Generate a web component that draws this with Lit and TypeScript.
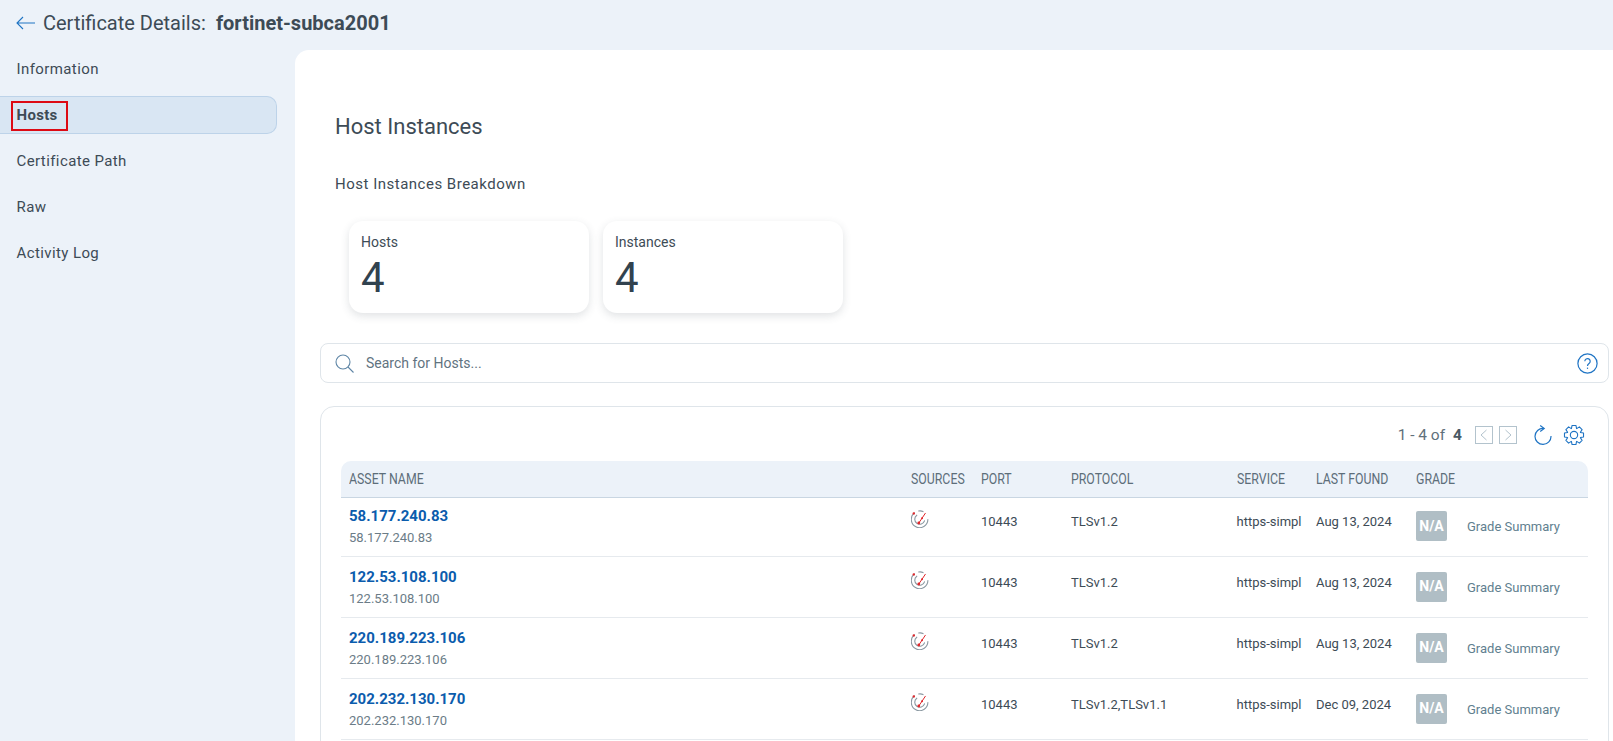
import {LitElement, css, html} from 'lit';
import {customElement} from 'lit/decorators.js';

const nav = ['Information', 'Hosts', 'Certificate Path', 'Raw', 'Activity Log'];

const rows = [
  {ip: '58.177.240.83', protocol: 'TLSv1.2', found: 'Aug 13, 2024'},
  {ip: '122.53.108.100', protocol: 'TLSv1.2', found: 'Aug 13, 2024'},
  {ip: '220.189.223.106', protocol: 'TLSv1.2', found: 'Aug 13, 2024'},
  {ip: '202.232.130.170', protocol: 'TLSv1.2,TLSv1.1', found: 'Dec 09, 2024'},
];

const columns = ['ASSET NAME', 'SOURCES', 'PORT', 'PROTOCOL', 'SERVICE', 'LAST FOUND', 'GRADE', ''];

// outline of an 8 tooth cog, centred on 12,12
function gearPath() {
  const pts: string[] = [];
  for (let i = 0; i < 8; i++) {
    const a = (i * Math.PI) / 4 - Math.PI / 2;
    for (const [r, off] of [[7.6, -0.38], [10.6, -0.2], [10.6, 0.2], [7.6, 0.38]]) {
      const x = 12 + r * Math.cos(a + off);
      const y = 12 + r * Math.sin(a + off);
      pts.push(`${x.toFixed(2)} ${y.toFixed(2)}`);
    }
  }
  return `M${pts.join('L')}Z`;
}

const sourceIcon = html`
  <svg class="source" viewBox="0 0 18 18" fill="none" stroke-linecap="round">
    <path d="M3.4 2.9A8.3 8.3 0 1 0 16.9 9.6" stroke="#8a98a1" stroke-width="1.1" />
    <path d="M5.8 5.2A5 5 0 1 0 13.5 10.8" stroke="#8a98a1" stroke-width="1.1" />
    <path d="M7.6 1C9.2.7 10.8.9 12 1.6" stroke="#8a98a1" stroke-width="1.1" />
    <path d="M7.8 13L14.3 3.3" stroke="#e0282c" stroke-width="1" />
    <circle cx="7.8" cy="13" r="1.4" fill="#e0282c" />
    <circle cx="2.8" cy="3.4" r="1.2" fill="#e0282c" />
    <circle cx="11" cy="8.2" r="1" fill="#e0282c" />
  </svg>
`;

@customElement('app-root')
export class AppRoot extends LitElement {
  static styles = css`
    :host {
      display: flex;
      flex-direction: column;
      height: 100vh;
      overflow: hidden;
      background: #ecf2f9;
      color: #3d4b56;
      font-family: Roboto, 'Liberation Sans', sans-serif;
    }

    .topbar {
      display: flex;
      align-items: center;
      height: 50px;
      flex: none;
      padding: 0 0 5px 16px;
      box-sizing: border-box;
      font-size: 20px;
    }

    .topbar svg {
      width: 19px;
      height: 14px;
      margin-right: 8px;
    }

    .topbar b {
      margin-left: 10px;
      font-weight: 700;
    }

    .body {
      display: flex;
      flex: 1;
      min-height: 0;
    }

    .side {
      width: 295px;
      flex: none;
    }

    .nav-item {
      display: flex;
      align-items: center;
      width: 277px;
      height: 38px;
      margin-bottom: 8px;
      padding-left: 16.5px;
      box-sizing: border-box;
      font-size: 15px;
      letter-spacing: 0.4px;
    }

    .nav-item.active {
      position: relative;
      background: #d9e6f3;
      border: 1px solid #bdd3e9;
      border-left: 0;
      border-radius: 0 10px 10px 0;
      font-weight: 700;
      letter-spacing: 0.3px;
    }

    .nav-item.active::before {
      content: '';
      position: absolute;
      left: 11px;
      top: 4px;
      width: 53px;
      height: 26px;
      border: 2px solid #dd0a14;
    }

    .panel {
      flex: 1;
      min-width: 0;
      background: #fff;
      border-top-left-radius: 14px;
      padding: 0 4px 0 25px;
    }

    h2 {
      margin: 62px 0 0 15px;
      font-size: 22px;
      line-height: 30px;
      font-weight: 400;
    }

    h3 {
      margin: 32px 0 0 15px;
      font-size: 15px;
      line-height: 20px;
      font-weight: 400;
      letter-spacing: 0.5px;
    }

    .stats {
      display: flex;
      gap: 14px;
      margin: 27px 0 0 29px;
    }

    .stat {
      width: 240px;
      height: 92px;
      padding: 12px 12px 0;
      box-sizing: border-box;
      border-radius: 14px;
      box-shadow: 0 3px 9px rgba(60, 75, 90, 0.16);
    }

    .stat span {
      display: block;
      font-size: 14px;
      line-height: 18px;
    }

    .stat strong {
      display: block;
      margin-top: 3px;
      font-size: 42px;
      line-height: 48px;
      font-weight: 400;
      color: #31424f;
    }

    .search {
      display: flex;
      align-items: center;
      height: 40px;
      margin-top: 30px;
      padding: 0 10px 0 14px;
      box-sizing: border-box;
      border: 1px solid #dfe5ea;
      border-radius: 8px;
      font-size: 14px;
      color: #61737f;
    }

    .search .glass {
      width: 19px;
      height: 19px;
      margin-right: 12px;
    }

    .search span {
      flex: 1;
    }

    .search .help {
      width: 21px;
      height: 21px;
    }

    .results {
      height: 400px;
      margin-top: 23px;
      padding: 18px 20px 0 20px;
      box-sizing: border-box;
      border: 1px solid #dfe5ea;
      border-radius: 14px 14px 0 0;
    }

    .pager {
      display: flex;
      align-items: center;
      justify-content: flex-end;
      height: 20px;
      padding-right: 3px;
      font-size: 15.5px;
      color: #5f707b;
    }

    .pager b {
      margin-left: 8px;
      color: #4a5964;
    }

    .page-btn {
      width: 18px;
      height: 18px;
      margin-left: 6px;
      border: 1px solid #b3c3cd;
      box-sizing: border-box;
    }

    .page-btn.first {
      margin-left: 13px;
    }

    .page-btn svg {
      display: block;
      width: 100%;
      height: 100%;
    }

    .pager .refresh {
      width: 19px;
      height: 20px;
      margin-left: 17px;
    }

    .pager .gear {
      width: 22px;
      height: 22px;
      margin-left: 10px;
    }

    .grid {
      display: grid;
      grid-template-columns: 562px 70px 90px 165.5px 79.5px 100px 51px 1fr;
      padding-left: 8px;
    }

    .head {
      align-items: center;
      height: 37px;
      margin-top: 16px;
      background: #ecf2f9;
      border-bottom: 1px solid #c9d6e2;
      border-radius: 10px 10px 0 0;
      box-sizing: border-box;
      font-size: 14px;
      color: #5d6e7a;
    }

    .head span {
      display: inline-block;
      transform: scaleX(0.88);
      transform-origin: left center;
      white-space: nowrap;
    }

    .row {
      height: 60.95px;
      box-sizing: border-box;
      border-bottom: 1px solid #e6eaee;
      font-size: 13px;
      color: #3d4b56;
    }

    /* the first row sits a little tighter under the header */
    .head + .row {
      margin-top: -2px;
    }

    .cell {
      padding-top: 17px;
      line-height: 17px;
      white-space: nowrap;
    }

    .name {
      padding-top: 10px;
    }

    .name a {
      display: block;
      font-size: 15px;
      line-height: 20px;
      font-weight: 700;
      color: #0b5cad;
    }

    .name small {
      display: block;
      margin-top: 3px;
      font-size: 13px;
      line-height: 17px;
      color: #6b7c87;
    }

    .source {
      display: block;
      width: 18px;
      height: 18px;
      margin-top: -3px;
    }

    .badge {
      display: flex;
      align-items: center;
      justify-content: center;
      width: 31px;
      height: 30px;
      margin-top: -2px;
      border-radius: 2px;
      background: #b0bec5;
      color: #fff;
      font-size: 14px;
      font-weight: 700;
    }

    .summary {
      padding-top: 22px;
      font-size: 13px;
      color: #61808f;
    }
  `;

  render() {
    return html`
      <div class="topbar">
        <svg viewBox="0 0 19 14" fill="none" stroke="#1f74c4" stroke-width="1.1">
          <path d="M19 7H1M7 1L1 7l6 6" />
        </svg>
        <span>Certificate Details:</span><b>fortinet-subca2001</b>
      </div>
      <div class="body">
        <nav class="side">
          ${nav.map(item => html`
            <div class="nav-item ${item === 'Hosts' ? 'active' : ''}">${item}</div>
          `)}
        </nav>
        <main class="panel">
          <h2>Host Instances</h2>
          <h3>Host Instances Breakdown</h3>
          <div class="stats">
            <div class="stat"><span>Hosts</span><strong>4</strong></div>
            <div class="stat"><span>Instances</span><strong>4</strong></div>
          </div>
          <div class="search">
            <svg class="glass" viewBox="0 0 19 19" fill="none" stroke="#5f86a6" stroke-width="1.1">
              <circle cx="8" cy="8" r="7" />
              <path d="M13 13l5.5 5.5" />
            </svg>
            <span>Search for Hosts...</span>
            <svg class="help" viewBox="0 0 21 21" fill="none" stroke="#1f74c4" stroke-width="1.2">
              <circle cx="10.5" cy="10.5" r="9.6" />
              <path d="M7.8 8.2a2.7 2.7 0 1 1 4.2 2.3c-1 .7-1.5 1.2-1.5 2.4" />
              <path d="M10.5 14.6v1.3" />
            </svg>
          </div>
          <section class="results">
            <div class="pager">
              <span>1 - 4 of</span><b>4</b>
              <div class="page-btn first">
                <svg viewBox="0 0 16 16" fill="none" stroke="#b3c3cd"><path d="M10.5 3L5 8l5.5 5" /></svg>
              </div>
              <div class="page-btn">
                <svg viewBox="0 0 16 16" fill="none" stroke="#b3c3cd"><path d="M5.5 3L11 8l-5.5 5" /></svg>
              </div>
              <svg class="refresh" viewBox="0 0 19 20" fill="none" stroke="#1f74c4" stroke-width="1.2">
                <path d="M9.5 3.4A8 8 0 1 0 17 11" />
                <path d="M6.2 .6l4 2.9-4 3" />
              </svg>
              <svg class="gear" viewBox="0 0 24 24" fill="none" stroke="#1f74c4" stroke-width="1.2" stroke-linejoin="round">
                <circle cx="12" cy="12" r="4" />
                <path d=${gearPath()} />
              </svg>
            </div>
            <div class="grid head">
              ${columns.map(c => html`<div><span>${c}</span></div>`)}
            </div>
            ${rows.map(r => html`
              <div class="grid row">
                <div class="cell name"><a>${r.ip}</a><small>${r.ip}</small></div>
                <div class="cell">${sourceIcon}</div>
                <div class="cell">10443</div>
                <div class="cell">${r.protocol}</div>
                <div class="cell">https-simpl</div>
                <div class="cell">${r.found}</div>
                <div class="cell"><div class="badge">N/A</div></div>
                <div class="cell summary">Grade Summary</div>
              </div>
            `)}
          </section>
        </main>
      </div>
    `;
  }
}
